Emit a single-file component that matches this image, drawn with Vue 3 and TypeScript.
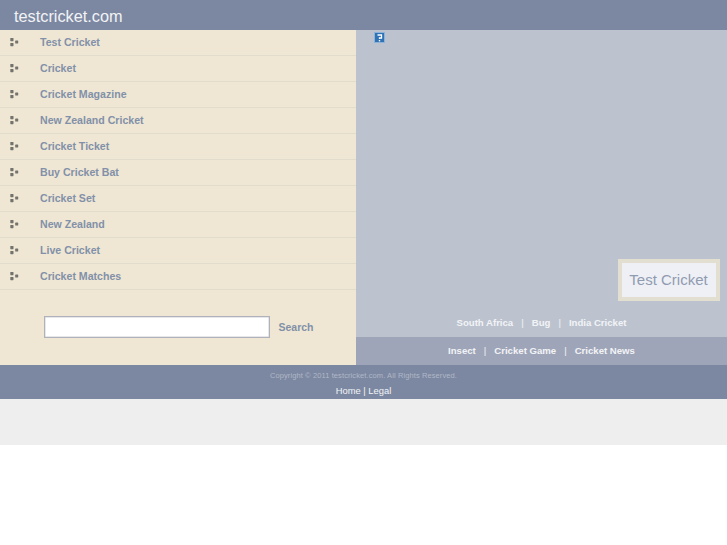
<script setup lang="ts">
const items: string[] = ['Test Cricket','Cricket','Cricket Magazine','New Zealand Cricket','Cricket Ticket','Buy Cricket Bat','Cricket Set','New Zealand','Live Cricket','Cricket Matches']
const linksA: string[] = ['South Africa','Bug','India Cricket']
const linksB: string[] = ['Insect','Cricket Game','Cricket News']
</script>

<template>
  <div class="page">
    <header class="top">testcricket.com</header>
    <main class="main">
      <section class="left">
        <ul class="menu">
          <li v-for="item in items" :key="item" class="row">
            <svg class="bullet" width="9" height="9" viewBox="0 0 9 9">
              <rect x="0.3" y="0" width="3.2" height="3.2" rx="0.6" fill="#73736e"/>
              <rect x="0.3" y="5" width="3.2" height="3.2" rx="0.6" fill="#73736e"/>
              <rect x="5.2" y="2.6" width="3" height="3" rx="0.6" fill="#73736e"/>
            </svg>
            <a class="link">{{ item }}</a>
          </li>
        </ul>
        <div class="search">
          <input class="box" type="text" />
          <span class="go">Search</span>
        </div>
      </section>
      <section class="right">
        <div class="canvas">
          <div class="help">
            <svg width="11" height="11" viewBox="0 0 11 11">
              <rect x="0.5" y="0.5" width="10" height="10" fill="#2f72b5" stroke="#8db4d8"/>
              <path d="M3.5 3h4v3H5.5v1" fill="none" stroke="#fff" stroke-width="1.3"/>
              <rect x="4.8" y="8" width="1.4" height="1.4" fill="#fff"/>
            </svg>
          </div>
          <div class="badge"><span>Test Cricket</span></div>
        </div>
        <nav class="strip a">
          <template v-for="(l, i) in linksA" :key="l">
            <span v-if="i" class="sep">|</span><a>{{ l }}</a>
          </template>
        </nav>
        <nav class="strip b">
          <template v-for="(l, i) in linksB" :key="l">
            <span v-if="i" class="sep">|</span><a>{{ l }}</a>
          </template>
        </nav>
      </section>
    </main>
    <footer class="foot">
      <div class="copy">Copyright © 2011 testcricket.com. All Rights Reserved.</div>
      <div class="legal">Home | Legal</div>
    </footer>
    <div class="band"></div>
  </div>
</template>

<style>
html, body { margin: 0; background: #fff; }
</style>

<style scoped>
.page { font-family: "Liberation Sans", Arial, sans-serif; width: 727px; }
.top { height: 30px; background: #7c88a1; color: #f2f3f6; font-size: 16.3px; line-height: 33px; padding-left: 14px; box-sizing: border-box; }
.main { display: flex; height: 335px; }
.left { width: 356px; background: #efe7d3; display: flex; flex-direction: column; }
.menu { list-style: none; margin: 0; padding: 0; }
.row { height: 26px; box-sizing: border-box; border-bottom: 1px solid #e1dccb; display: flex; align-items: center; padding: 0 0 1px 10px; }
.bullet { flex: none; }
.link { margin-left: 21px; color: #8290a9; font-size: 10.6px; font-weight: 700; }
.search { display: flex; align-items: center; padding: 26px 0 0 44px; }
.box { width: 226px; height: 22px; box-sizing: border-box; background: #fff; border: 1px solid #b0b2bb; box-shadow: inset 0 0 0 0.5px #cfd0d4; padding: 0; margin: 0; outline: none; }
.go { margin-left: 8.5px; color: #8290a9; font-size: 10.5px; font-weight: 700; }
.right { flex: 1; background: #bcc3cf; display: flex; flex-direction: column; }
.canvas { flex: 1; position: relative; }
.help { position: absolute; left: 18px; top: 2px; width: 11px; height: 11px; line-height: 0; }
.badge { position: absolute; left: 262px; top: 229px; width: 102px; height: 42px; box-sizing: border-box; border: 4px solid #e3dfd0; background: #eef0f6; color: #919bb0; font-size: 15px; display: flex; align-items: center; justify-content: center; padding: 0 1px 2px 0; }
.strip { display: flex; justify-content: center; align-items: center; color: #f2f3f6; font-size: 9.6px; font-weight: 700; padding-bottom: 2px; box-sizing: border-box; }
.strip.a { height: 28px; }
.strip.b { height: 28px; background: #9fa5b8; }
.sep { margin: 0 8px; font-weight: 400; }
.foot { height: 34px; background: #7c88a1; text-align: center; }
.copy { color: #b0b7c7; font-size: 7.5px; line-height: 9px; padding-top: 6px; letter-spacing: 0.1px; }
.legal { color: #f2f3f6; font-size: 9.4px; line-height: 12px; padding-top: 5px; }
.band { height: 46px; background: #eee; }
</style>
